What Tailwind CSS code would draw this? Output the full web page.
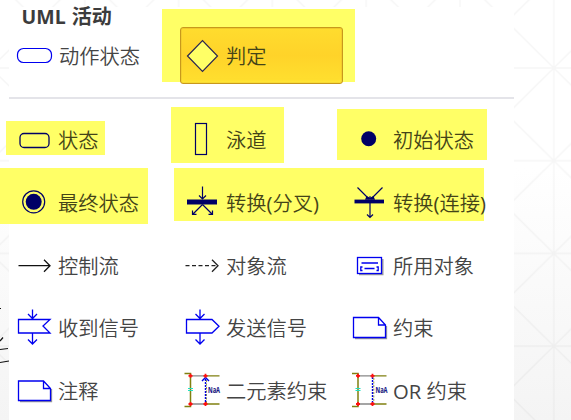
<!DOCTYPE html>
<html lang="zh-CN">
<head>
<meta charset="utf-8">
<title>UML 活动</title>
<script src="https://cdn.jsdelivr.net/npm/@tailwindcss/browser@4"></script>
</head>
<body class="relative h-[420px] w-[571px] overflow-hidden bg-linear-to-b from-white from-40% to-[#f4f4f4] font-['Open_Sans','Noto_Sans_CJK_SC',sans-serif] text-[20.250px] leading-[41px] font-[350] text-[#444]">
<!-- Canvas lattice -->
<svg class="absolute inset-0" width="571" height="420" fill="none">
  <defs>
    <pattern id="lattice" x="-9" y="68" width="93.8" height="92.7" patternUnits="userSpaceOnUse">
      <path d="M0 0H93.8M93.8 0V92.7M0 0V92.7M0 92.7H93.8M0 0L93.8 92.7M93.8 0L0 92.7" stroke="#000" stroke-opacity=".035" stroke-width="1.300"/>
    </pattern>
  </defs>
  <rect width="571" height="420" fill="url(#lattice)"/>
  <path d="M0 308.500h1M0 341l3-3.500M0 349.500l8-1M0 362.500l9-1.500" stroke="#111" stroke-width="1.2"/>
</svg>

<main class="relative ml-[9px] mt-[7px] h-[413px] w-[505px] bg-white">
  <!-- Marker highlights under the tool items -->
  <div class="absolute left-[153px] top-[2px] h-[73px] w-[193px] bg-[#ffff66]"></div>
  <div class="absolute left-[-3px] top-[114px] h-[34px] w-[99px] bg-[#ffff66]"></div>
  <div class="absolute left-[162px] top-[100px] h-[56px] w-[113px] bg-[#ffff66]"></div>
  <div class="absolute left-[328px] top-[101.500px] h-[51px] w-[150px] bg-[#ffff66]"></div>
  <div class="absolute left-[-9px] top-[161px] h-[56px] w-[147.500px] bg-[#ffff66]"></div>
  <div class="absolute left-[165px] top-[161px] h-[52.500px] w-[310px] bg-[#ffff66]"></div>

  <section class="relative h-[92px] border-b-2 border-[#e4e4e9]">
    <h1 class="h-5 pl-[12.500px] text-[19.500px] font-bold leading-[20px] text-[#3c3c3c]">UML <span class="ml-px text-[20px]">活动</span></h1>
    <div class="flex">
      <div class="mt-[9px] flex h-10 w-[171px] pl-[5px]">
        <svg class="h-10 w-11 shrink-0" fill="none"><rect x="3.500" y="12.500" width="34" height="14" rx="6" stroke="#0000f0" stroke-width="1.200"/></svg>
        <span class="pl-px">动作状态</span>
      </div>
      <div class="flex h-[57px] w-[163px] items-center rounded-[3px] border border-[#c8981c] bg-linear-to-b from-[#ffdc2e] via-[#ffd329] to-[#ffe02f] pl-px shadow-[inset_0_-2px_3px_#fff04080,inset_0_0_0_1px_#d8a82460]">
        <svg class="h-10 w-11 shrink-0" fill="none"><path d="M5.500 20L20.500 4.500L35.500 20L20.500 35.500Z" fill="#ffff66" stroke="#2a2450" stroke-width="1.200"/></svg>
        <span class="pt-[2px] text-[#444418]">判定</span>
      </div>
    </div>
  </section>

  <section class="relative mt-[21px] grid grid-cols-[168px_167px_157px] grid-rows-[63px_63px_62px_63px_40px] whitespace-nowrap pl-[5px]">
    <div class="flex h-10 text-[#444418]">
      <svg class="h-10 w-11 shrink-0" fill="none"><rect x="6" y="13.500" width="29" height="14" rx="4" stroke="#000066" stroke-width="1.300"/></svg>
      <span>状态</span>
    </div>
    <div class="flex h-10 text-[#444418]">
      <svg class="h-10 w-11 shrink-0" fill="none"><rect x="13.500" y="3.500" width="11" height="31" stroke="#000066" stroke-width="1.200"/></svg>
      <span>泳道</span>
    </div>
    <div class="flex h-10 text-[#444418]">
      <svg class="h-10 w-11 shrink-0"><circle cx="19.700" cy="18.700" r="7.500" fill="#000066"/></svg>
      <span>初始状态</span>
    </div>

    <div class="flex h-10 text-[#444418]">
      <svg class="h-10 w-11 shrink-0" fill="none"><circle cx="19.700" cy="18.800" r="11" stroke="#000066" stroke-width="1.200"/><circle cx="19.700" cy="18.800" r="8" fill="#000066"/></svg>
      <span>最终状态</span>
    </div>
    <div class="flex h-10 text-[#444418]">
      <svg class="h-10 w-11 shrink-0" fill="none" stroke="#000066" stroke-width="1.200"><path d="M5 19H35" stroke-width="5"/><path d="M20.500 3.500V16M17 12.500L20.500 16L24 12.500M20.500 21.500L11 31M20.500 21.500L30 31M10.500 27.500V31.300H14.500M30.500 27.500V31.300H26.500"/></svg>
      <span>转换<span class="font-normal">(</span>分叉<span class="font-normal">)</span></span>
    </div>
    <div class="flex h-10 text-[#444418]">
      <svg class="h-10 w-11 shrink-0" fill="none" stroke="#000066" stroke-width="1.200"><path d="M5.500 18.500H35" stroke-width="3.800"/><path d="M8.500 4.500L20 16M33.500 4.500L22 16M21 18V34M18 31.500L21 34.500L24 31.500"/><path d="M16 16.800L17.500 13L20.500 14.500V13H21.500V14.500L24.500 13L26 16.800Z" fill="#000066" stroke="none"/></svg>
      <span>转换<span class="font-normal">(</span>连接<span class="font-normal">)</span></span>
    </div>

    <div class="flex h-10">
      <svg class="h-10 w-11 shrink-0" fill="none"><path d="M4.500 19.700H36M30 13.700L36 19.700L30 25.700" stroke="#111" stroke-width="1.300"/></svg>
      <span>控制流</span>
    </div>
    <div class="flex h-10">
      <svg class="h-10 w-11 shrink-0" fill="none" stroke="#222" stroke-width="1.300"><path d="M3.500 19.700H34" stroke-dasharray="4 2.500"/><path d="M30 13.700L36 19.700L30 25.700"/></svg>
      <span>对象流</span>
    </div>
    <div class="flex h-10">
      <svg class="h-10 w-11 shrink-0" fill="none"><path d="M10 28.500H33.800V13" stroke="#999" stroke-width="1.400"/><g stroke="#0000f0" stroke-width="1.300"><rect x="8.500" y="11.500" width="24" height="16"/><path d="M12.500 17H29M13.500 21H11.800V24.500H13.500M27.500 21H29.200V24.500H27.500M15.500 22.500H25.500"/></g></svg>
      <span>所用对象</span>
    </div>

    <div class="flex h-10">
      <svg class="h-10 w-11 shrink-0" fill="none" stroke="#0000f0" stroke-width="1.300"><path d="M4.500 11.500H36L29 18L36 25H4.500ZM18.500 1.500V11M14 6L18.500 10.500L23 6M18.500 25V36M14 31.500L18.500 36L23 31.500"/></svg>
      <span>收到信号</span>
    </div>
    <div class="flex h-10">
      <svg class="h-10 w-11 shrink-0" fill="none" stroke="#0000f0" stroke-width="1.300"><path d="M4.500 11.500H30L37 18.300L30 25H4.500ZM18 1.500V11M13.500 6L18 10.500L22.500 6M18 25V36M13.500 31.500L18 36L22.500 31.500"/></svg>
      <span>发送信号</span>
    </div>
    <div class="flex h-10">
      <svg class="h-10 w-11 shrink-0" fill="none"><path d="M6 30.500H37.500V18" stroke="#999" stroke-width="1.300"/><path d="M4.500 9.500H29.500L36.500 17V29.500H4.500ZM29.500 9.500V17H36.500" stroke="#0000f0" stroke-width="1.300"/></svg>
      <span>约束</span>
    </div>

    <div class="flex h-10">
      <svg class="h-10 w-11 shrink-0" fill="none"><path d="M6 30.500H37.500V18" stroke="#999" stroke-width="1.300"/><path d="M4.500 10H29.500L36.500 17.500V29.500H4.500ZM29.500 10V17.500H36.500" stroke="#0000f0" stroke-width="1.300"/></svg>
      <span>注释</span>
    </div>
    <div class="flex h-10">
      <svg class="h-10 w-11 shrink-0" fill="none">
        <path d="M2.500 2.500H8.500V35.500H2.500" stroke="#808010" stroke-width="1.500"/>
        <path d="M8.500 4.800H23.500M8.500 33H23.500" stroke="#888" stroke-width="1.300"/>
        <path d="M23.500 4.800H37.500M23.500 33H37.500" stroke="#808010" stroke-width="1.300"/>
        <path d="M24.500 9V32" stroke="#a0a040" stroke-width="1" stroke-dasharray="2 1.500"/>
        <path d="M23.500 8V32" stroke="#0000e0" stroke-width="1.400" stroke-dasharray="2 1"/>
        <path d="M20 10L23.500 6.500L27 10" stroke="#0000e0" stroke-width="1.400"/>
        <path d="M6 17.500H11M6 19.500H11" stroke="#20e0c0" stroke-width="1.200"/>
        <path d="M6.500 4.800h4M8.500 2.800v4M21.500 4.800h4M23.500 2.800v4M6.500 33h4M8.500 31v4M21.500 33h4M23.500 31v4" stroke="#ff1010" stroke-width="1.800"/>
        <text x="26" y="21.500" fill="#0000b0" stroke="#808010" stroke-width=".2" font-size="8" font-weight="700" textLength="12" lengthAdjust="spacingAndGlyphs">NaA</text>
      </svg>
      <span>二元素约束</span>
    </div>
    <div class="flex h-10">
      <svg class="h-10 w-11 shrink-0" fill="none">
        <path d="M3 2.500H9V35.500H3" stroke="#808010" stroke-width="1.500"/>
        <path d="M9 4.800H23.500M9 33H23.500" stroke="#888" stroke-width="1.300"/>
        <path d="M23.500 4.800H37.500M23.500 33H37.500" stroke="#808010" stroke-width="1.300"/>
        <path d="M24.800 7V32" stroke="#a0a040" stroke-width="1" stroke-dasharray="2 1.500"/>
        <path d="M23.500 6V32" stroke="#0000e0" stroke-width="1.400" stroke-dasharray="2 1"/>
        <path d="M6.500 17.500H11.500M6.500 19.500H11.500" stroke="#20e0c0" stroke-width="1.200"/>
        <path d="M7 4.800h4M9 2.800v4M21.500 4.800h4M23.500 2.800v4M7 33h4M9 31v4M21.500 33h4M23.500 31v4" stroke="#ff1010" stroke-width="1.800"/>
        <text x="26.500" y="21.500" fill="#0000b0" stroke="#808010" stroke-width=".2" font-size="8" font-weight="700" textLength="12" lengthAdjust="spacingAndGlyphs">NaA</text>
      </svg>
      <span><span class="font-normal">OR</span> 约束</span>
    </div>
  </section>
</main>
</body>
</html>
